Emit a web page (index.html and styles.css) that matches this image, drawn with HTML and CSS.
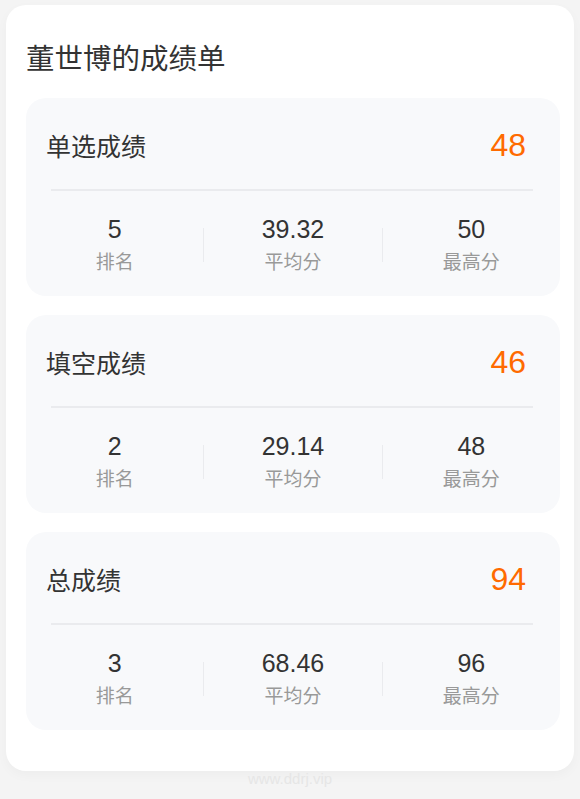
FILE: index.html
```html
<!DOCTYPE html>
<html lang="zh-CN">
<head>
    <meta charset="UTF-8">
    <meta name="viewport" content="width=device-width, initial-scale=1.0">
    <title>成绩单</title>
    <link rel="stylesheet" href="styles.css">
</head>
<body>
    <div class="sheet">
        <h1 class="sheet-title">董世博的成绩单</h1>

        <div class="score-card">
            <div class="score-head">
                <span class="score-name">单选成绩</span>
                <span class="score-total">48</span>
            </div>
            <div class="score-line"></div>
            <div class="stats">
                <div class="stat"><div class="stat-value">5</div><div class="stat-label">排名</div></div>
                <div class="stat-sep"></div>
                <div class="stat"><div class="stat-value">39.32</div><div class="stat-label">平均分</div></div>
                <div class="stat-sep"></div>
                <div class="stat"><div class="stat-value">50</div><div class="stat-label">最高分</div></div>
            </div>
        </div>

        <div class="score-card">
            <div class="score-head">
                <span class="score-name">填空成绩</span>
                <span class="score-total">46</span>
            </div>
            <div class="score-line"></div>
            <div class="stats">
                <div class="stat"><div class="stat-value">2</div><div class="stat-label">排名</div></div>
                <div class="stat-sep"></div>
                <div class="stat"><div class="stat-value">29.14</div><div class="stat-label">平均分</div></div>
                <div class="stat-sep"></div>
                <div class="stat"><div class="stat-value">48</div><div class="stat-label">最高分</div></div>
            </div>
        </div>

        <div class="score-card">
            <div class="score-head">
                <span class="score-name">总成绩</span>
                <span class="score-total">94</span>
            </div>
            <div class="score-line"></div>
            <div class="stats">
                <div class="stat"><div class="stat-value">3</div><div class="stat-label">排名</div></div>
                <div class="stat-sep"></div>
                <div class="stat"><div class="stat-value">68.46</div><div class="stat-label">平均分</div></div>
                <div class="stat-sep"></div>
                <div class="stat"><div class="stat-value">96</div><div class="stat-label">最高分</div></div>
            </div>
        </div>
    </div>

    <div class="watermark">www.ddrj.vip</div>
</body>
</html>
```

FILE: styles.css
```css
*{
    margin: 0;
    padding: 0;
    box-sizing: border-box;
}
body{
    background-color: #f4f4f4;
    font-family: 'Liberation Sans', 'Noto Sans CJK SC', sans-serif;
    color: #333;
}
.sheet{
    margin: 5px 6px 0;
    padding: 0 14px 41px 20px;
    background-color: #fff;
    border-radius: 20px;
    box-shadow: 0 4px 12px rgba(0,0,0,.03);
}
.sheet-title{
    font-size: 28.5px;
    font-weight: normal;
    line-height: 40px;
    padding: 34px 0 19px;
}
.score-card{
    background-color: #f8f9fb;
    border-radius: 20px;
    padding: 27px 0 20px;
    margin-bottom: 19px;
}
.score-card:last-child{
    margin-bottom: 0;
}
.score-head{
    display: flex;
    justify-content: space-between;
    align-items: center;
    padding: 0 34px 0 20px;
    height: 40px;
}
.score-name{
    font-size: 25px;
}
.score-total{
    font-size: 32px;
    color: #ff6a00;
}
.score-line{
    height: 2px;
    background-color: #eaebee;
    margin: 24px 27px 0 25px;
}
.stats{
    display: flex;
    margin-top: 23px;
}
.stat{
    flex: 1;
    text-align: center;
}
.stat-sep{
    width: 1px;
    height: 34px;
    align-self: center;
    background-color: #eaebee;
}
.stat-value{
    font-size: 25px;
    line-height: 30px;
}
.stat-label{
    font-size: 19px;
    line-height: 26px;
    margin-top: 6px;
    color: #999;
}
.watermark{
    text-align: center;
    font-size: 15px;
    color: #e6e6e6;
    line-height: 16px;
}
```
